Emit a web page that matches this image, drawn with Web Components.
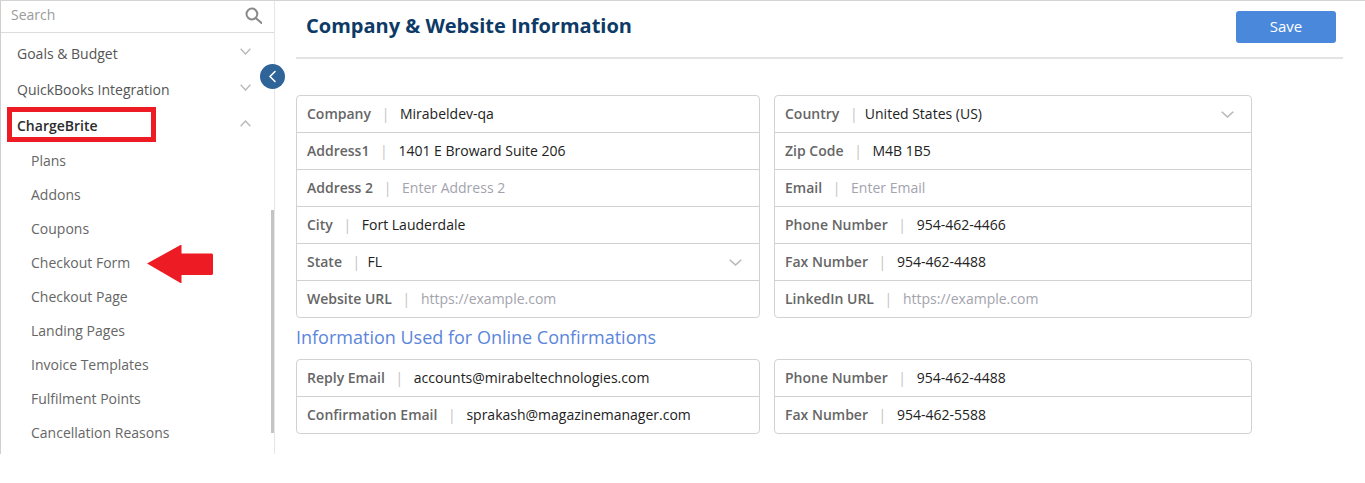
<!DOCTYPE html>
<html lang="en"><head><meta charset="utf-8"><title>Company & Website Information</title>
<style>
html,body{margin:0;padding:0;background:#fff;font-family:"Open Sans",sans-serif;height:483px;overflow:hidden}
</style></head>
<body>
<app-shell>
  <side-nav slot="side">
    <nav-item label="Goals &amp; Budget" chev="down"></nav-item>
    <nav-item label="QuickBooks Integration" chev="down"></nav-item>
    <nav-item label="ChargeBrite" chev="up" active></nav-item>
    <nav-sub>Plans</nav-sub>
    <nav-sub>Addons</nav-sub>
    <nav-sub>Coupons</nav-sub>
    <nav-sub>Checkout Form</nav-sub>
    <nav-sub>Checkout Page</nav-sub>
    <nav-sub>Landing Pages</nav-sub>
    <nav-sub>Invoice Templates</nav-sub>
    <nav-sub>Fulfilment Points</nav-sub>
    <nav-sub>Cancellation Reasons</nav-sub>
  </side-nav>
  <page-head slot="head" title-text="Company &amp; Website Information"></page-head>
  <form-box slot="a1" style="width:464px">
    <form-row label="Company" value="Mirabeldev-qa"></form-row>
    <form-row label="Address1" value="1401 E Broward Suite 206"></form-row>
    <form-row label="Address 2" placeholder="Enter Address 2"></form-row>
    <form-row label="City" value="Fort Lauderdale"></form-row>
    <form-row label="State" value="FL" select></form-row>
    <form-row label="Website URL" placeholder="https://example.com"></form-row>
  </form-box>
  <form-box slot="a2" style="width:478px">
    <form-row label="Country" value="United States (US)" select></form-row>
    <form-row label="Zip Code" value="M4B 1B5"></form-row>
    <form-row label="Email" placeholder="Enter Email"></form-row>
    <form-row label="Phone Number" value="954-462-4466"></form-row>
    <form-row label="Fax Number" value="954-462-4488"></form-row>
    <form-row label="LinkedIn URL" placeholder="https://example.com"></form-row>
  </form-box>
  <form-box slot="b1" style="width:464px">
    <form-row label="Reply Email" value="accounts@mirabeltechnologies.com"></form-row>
    <form-row label="Confirmation Email" value="sprakash@magazinemanager.com"></form-row>
  </form-box>
  <form-box slot="b2" style="width:478px">
    <form-row label="Phone Number" value="954-462-4488"></form-row>
    <form-row label="Fax Number" value="954-462-5588"></form-row>
  </form-box>
</app-shell>
<script>
const esc=s=>String(s??'').replace(/&/g,'&amp;').replace(/</g,'&lt;').replace(/"/g,'&quot;');
const chevron=(dir,w=11,h=7)=>`<svg width="${w}" height="${h}" viewBox="0 0 12 7" preserveAspectRatio="none" fill="none" stroke="#b9b9b9" stroke-width="1.5" aria-hidden="true"><path d="${dir==='up'?'M.7 6.3 6 1l5.3 5.3':'M.7.7 6 6 11.3.7'}"/></svg>`;
class Base extends HTMLElement{
  constructor(){super();this.attachShadow({mode:'open'});}
}
customElements.define('app-shell',class extends Base{connectedCallback(){this.shadowRoot.innerHTML=`<style>
:host{display:block;position:relative;width:1365px;height:483px;overflow:hidden}
.top{display:flex;height:454px;border-top:1px solid #d4d4d4;box-sizing:border-box}
.main{flex:1;min-width:0;padding:0 22px 0 21px;display:flex;flex-direction:column}
.grid{display:flex;gap:14px}
.g1{margin-top:36px}
h2{margin:7px 0 9px;font:400 18px/24px "Open Sans",sans-serif;color:#5b86dc;height:25px}
.toggle{position:absolute;left:260px;top:64px;width:25px;height:25px;border-radius:50%;background:#2f6499;display:flex;align-items:center;justify-content:center}
.mark{position:absolute;left:7px;top:107px;width:149px;height:35px;box-sizing:border-box;border:5px solid #ed1c24}
.arrow{position:absolute;left:147px;top:245px}
</style>
<div class="top">
  <slot name="side"></slot>
  <div class="main">
    <slot name="head"></slot>
    <div class="grid g1"><slot name="a1"></slot><slot name="a2"></slot></div>
    <h2>Information Used for Online Confirmations</h2>
    <div class="grid"><slot name="b1"></slot><slot name="b2"></slot></div>
  </div>
</div>
<div class="toggle"><svg width="9" height="13" viewBox="0 0 9 13" fill="none" stroke="#fff" stroke-width="1.6" stroke-linecap="round" stroke-linejoin="round" aria-hidden="true"><path d="M7 1.500 2 6.500l5 5"/></svg></div>
<div class="mark"></div>
<svg class="arrow" width="67" height="38" viewBox="0 0 67 38" aria-hidden="true"><path fill="#ed1c24" d="M0 18.500 33.500 0H34.500V8.500H65L66 9.500V29L65 30H34.500V38H33.500Z"/></svg>`;}});
customElements.define('side-nav',class extends Base{connectedCallback(){this.shadowRoot.innerHTML=`<style>
:host{display:block;position:relative;flex:none;width:275px;height:453px;box-sizing:border-box;border-left:1px solid #cfcfcf;border-right:1px solid #e6e6e6;overflow:hidden}
.search{height:32px;box-sizing:border-box;border-bottom:1px solid #dcdcdc;display:flex;align-items:center;justify-content:space-between;padding:0 12px 4px 10px;font-size:14px;color:#9b9b9b}
.list{padding-top:2px}
.bar{position:absolute;right:0;top:209px;width:3px;height:223px;background:#c4c4c4}
svg{margin-top:3px}
</style>
<div class="search"><span>Search</span><svg width="18" height="18" viewBox="0 0 18 18" fill="none" stroke="#8a8a8a" stroke-width="2" aria-hidden="true"><circle cx="7.900" cy="7" r="5.400"/><path d="m12 11.200 5.500 4.800" stroke-linecap="round"/></svg></div>
<div class="list"><slot></slot></div>
<div class="bar"></div>`;}});
customElements.define('nav-item',class extends Base{connectedCallback(){const a=this.hasAttribute('active');this.shadowRoot.innerHTML=`<style>
:host{display:flex;align-items:center;justify-content:space-between;height:36px;padding:0 23px 0 16px;font-size:14px;color:${a?'#2c2c2c':'#555'};font-weight:${a?600:400}}
svg{margin-top:-4px}
</style><span>${esc(this.getAttribute('label'))}</span>${chevron(this.getAttribute('chev'))}`;}});
customElements.define('nav-sub',class extends Base{connectedCallback(){this.shadowRoot.innerHTML=`<style>
:host{display:flex;align-items:center;height:34px;padding-left:30px;font-size:14px;color:#666}
</style><slot></slot>`;}});
customElements.define('page-head',class extends Base{connectedCallback(){this.shadowRoot.innerHTML=`<style>
:host{display:flex;align-items:flex-start;justify-content:space-between;height:58px;box-sizing:border-box;border-bottom:2px solid #e3e3e3;padding:10px 7px 0 10px}
h1{margin:0;font:700 20px/30px "Open Sans",sans-serif;color:#0d3a66}
button{width:100px;height:32px;border:0;border-radius:3px;background:#4a88dc;color:#fff;font:400 15px "Open Sans",sans-serif;padding:0 0 2px 0}
</style><h1>${esc(this.getAttribute('title-text'))}</h1><button type="button">Save</button>`;}});
customElements.define('form-box',class extends Base{connectedCallback(){this.shadowRoot.innerHTML=`<style>
:host{display:block;box-sizing:border-box;border:1px solid #d2d2d2;border-radius:4px;background:#fff}
</style><slot></slot>`;}});
customElements.define('form-row',class extends Base{connectedCallback(){
const v=this.getAttribute('value'),p=this.getAttribute('placeholder'),sel=this.hasAttribute('select');
this.shadowRoot.innerHTML=`<style>
:host{display:flex;align-items:center;height:37px;box-sizing:border-box;padding:0 17px 2px 10px;font-size:14px;border-bottom:1px solid #d2d2d2}
:host(:last-child){border-bottom:0;height:36px}
.l{font-weight:600;color:#666}
.s{color:#c4c4c4;margin:0 ${sel?'7.2px':'10.65px'} 0 10.65px}
.v{color:#222;flex:1}
.p{color:#a3a3ad;flex:1}
svg{margin-top:2px}
</style><span class="l">${esc(this.getAttribute('label'))}</span><span class="s">|</span><span class="${p?'p':'v'}">${esc(p||v)}</span>${sel?chevron('down',13,7):''}`;}});
</script>
</body></html>
